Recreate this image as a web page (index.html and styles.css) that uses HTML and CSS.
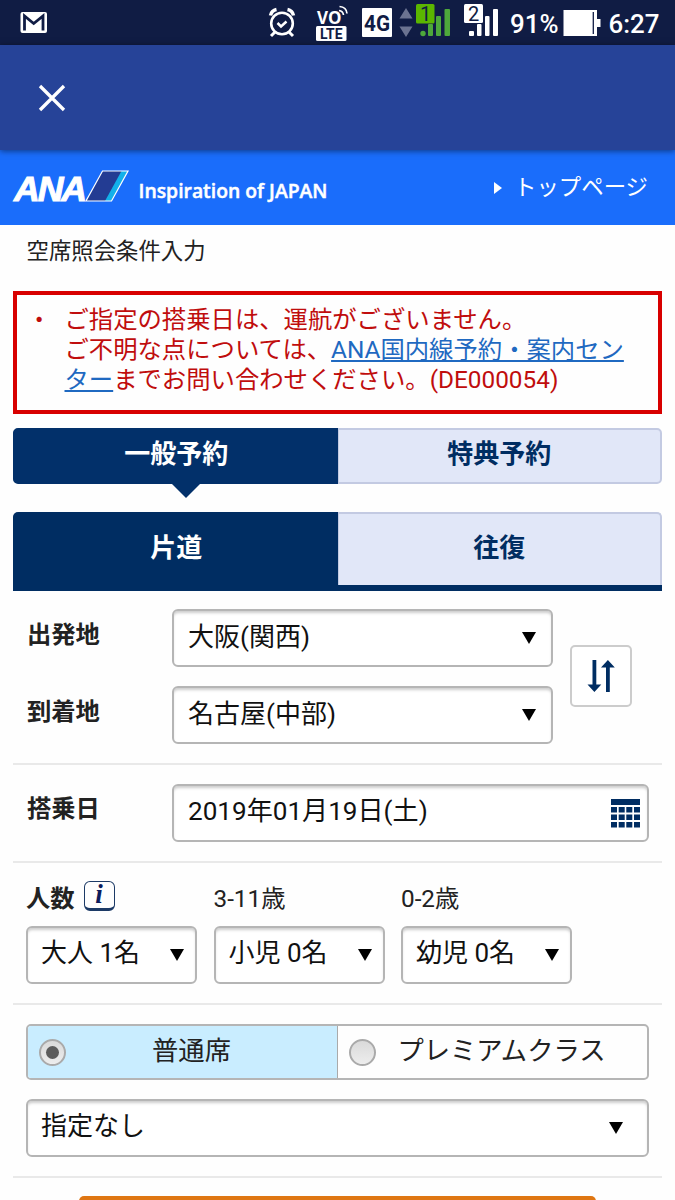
FILE: index.html
```html
<!DOCTYPE html>
<html lang="ja">
<head>
  <title>空席照会条件入力</title>
  <meta charset="utf-8">
  <link rel="stylesheet" href="styles.css">
</head>
<body>
  <div class="screen">
    <div class="status-bar">
      <svg width="675" height="45" viewBox="0 0 675 45">
        <!-- mail -->
        <rect x="20.5" y="12" width="26.5" height="21" rx="2" fill="#fff"/>
        <path d="M24.5 30.5V16l9.2 7.5L43 16v14.5" fill="none" stroke="#101c44" stroke-width="2.8"/>
        <!-- alarm -->
        <g fill="none" stroke="#fff">
          <circle cx="282" cy="23.5" r="10.8" stroke-width="2.6"/>
          <path d="M277.5 23l3.5 3.5 5.5-5" stroke-width="2.5"/>
          <path d="M270.5 15.5q1-5 6-6M293.5 15.5q-1-5-6-6" stroke-width="3.5"/>
          <path d="M275 32l-4 4M289 32l4 4" stroke-width="3"/>
        </g>
        <!-- volte -->
        <text x="317" y="23.5" class="st-bold" font-size="17" textLength="24.5" lengthAdjust="spacingAndGlyphs">VO</text>
        <path d="M339 10.5q4 .5 4.5 4.5M339.5 6.5q7 .5 7.5 7" fill="none" stroke="#fff" stroke-width="1.7"/>
        <rect x="316" y="26" width="30.5" height="15" rx="1.5" fill="#fff"/>
        <text x="320" y="38.5" class="st-dark" font-size="14" textLength="22.5" lengthAdjust="spacingAndGlyphs">LTE</text>
        <!-- network -->
        <rect x="362" y="8" width="30" height="29" rx="1" fill="#fff"/>
        <text x="364" y="30.5" class="st-dark" font-size="22" textLength="26" lengthAdjust="spacingAndGlyphs">4G</text>
        <path d="M406 8l6.5 10.5h-13zM406 37l6.5-10.5h-13z" fill="#6b7391"/>
        <!-- sim 1 -->
        <g fill="#4ea83b">
          <circle cx="423" cy="33.5" r="2.7"/>
          <rect x="428" y="24" width="5" height="12" rx="1"/>
          <rect x="436" y="16" width="5" height="20" rx="1"/>
          <rect x="444.5" y="9" width="5.5" height="27" rx="1"/>
        </g>
        <rect x="416" y="4" width="18.5" height="19.5" rx="1.5" fill="#5bb600"/>
        <text x="420" y="21" class="st-num" font-size="20">1</text>
        <!-- sim 2 -->
        <g fill="#fff">
          <rect x="469" y="31" width="5" height="5" rx="1"/>
          <rect x="477" y="24" width="4.5" height="12" rx="1"/>
          <rect x="485" y="16" width="4.5" height="20" rx="1"/>
          <rect x="493" y="9" width="5" height="27" rx="1"/>
        </g>
        <rect x="464" y="4" width="19" height="19" rx="1.5" fill="#fff"/>
        <text x="468" y="21" class="st-num" font-size="20">2</text>
        <text x="510" y="32.5" class="st-text" font-size="26" textLength="48.5" lengthAdjust="spacingAndGlyphs">91%</text>
        <!-- battery -->
        <path d="M563.5 10H597v9h3.5v8H597v9h-33.5z" fill="#fff"/>
        <path d="M593.3 12v22" stroke="#101c44" stroke-width="1.3"/>
        <text x="608.5" y="32.5" class="st-text" font-size="26" textLength="51" lengthAdjust="spacingAndGlyphs">6:27</text>
      </svg>
    </div>

    <div class="app-bar">
      <svg width="28" height="28" viewBox="0 0 28 28">
        <path d="M2 2l24 24M26 2L2 26" stroke="#fff" stroke-width="3.3"/>
      </svg>
    </div>

    <header class="site-header">
      <svg class="logo" width="340" height="60" viewBox="0 0 340 60">
        <text x="14" y="36.3" class="ana" font-size="34.5" textLength="71" lengthAdjust="spacingAndGlyphs">ANA</text>
        <path d="M102.5 6H128l-16.5 30H86z" fill="#233c93"/>
        <path d="M121.5 6H128l-16.5 30H105z" fill="#12b0ea"/>
        <path d="M102.5 6H128l-16.5 30H86z" fill="none" stroke="#fff" stroke-width="1.2"/>
        <text x="138.5" y="32.5" class="tagline" font-size="20.5" textLength="189" lengthAdjust="spacingAndGlyphs">Inspiration of JAPAN</text>
      </svg>
      <a class="top-link" href="#">トップページ</a>
    </header>

    <h1>空席照会条件入力</h1>

    <div class="error-box">
      <span class="bullet">・</span>
      <p>ご指定の搭乗日は、運航がございません。<br>ご不明な点については、<a href="#">ANA国内線予約・案内セン<br>ター</a>までお問い合わせください。(DE000054)</p>
    </div>

    <div class="tabs type-tabs">
      <div class="tab active">一般予約</div>
      <div class="tab">特典予約</div>
    </div>

    <div class="tabs trip-tabs">
      <div class="tab active">片道</div>
      <div class="tab">往復</div>
    </div>

    <div class="section route">
      <div class="route-fields">
        <div class="row">
          <label for="from">出発地</label>
          <div class="field"><select id="from"><option>大阪(関西)</option></select><span class="arrow"></span></div>
        </div>
        <div class="row">
          <label for="to">到着地</label>
          <div class="field"><select id="to"><option>名古屋(中部)</option></select><span class="arrow"></span></div>
        </div>
      </div>
      <button class="swap">
        <svg width="30" height="34" viewBox="0 0 30 34">
          <path d="M6.5 1h3.800v24.500h5L8.400 33 1.500 25.500h5zM20 33h3.800V8.500h5L21.900 1 15 8.500h5z" fill="#002d62"/>
        </svg>
      </button>
    </div>

    <div class="section">
      <div class="row">
        <label for="date">搭乗日</label>
        <div class="field date">
          <input type="text" id="date" value="2019年01月19日(土)">
          <svg width="29" height="29" viewBox="0 0 29 29" fill="#002d62">
            <path d="M0 0h29v6H0z"/>
            <path d="M0 8h6v5.500H0zM7.700 8h6v5.500h-6zM15.300 8h6v5.500h-6zM23 8h6v5.500h-6z"/>
            <path d="M0 15.500h6V21H0zM7.700 15.500h6V21h-6zM15.300 15.500h6V21h-6zM23 15.500h6V21h-6z"/>
            <path d="M0 23h6v5.500H0zM7.700 23h6v5.500h-6zM15.300 23h6v5.500h-6zM23 23h6v5.500h-6z"/>
          </svg>
        </div>
      </div>
    </div>

    <div class="section passengers">
      <div class="passenger">
        <div class="caption"><b>人数</b><span class="info">i</span></div>
        <div class="field"><select><option>大人 1名</option></select><span class="arrow"></span></div>
      </div>
      <div class="passenger">
        <div class="caption">3-11歳</div>
        <div class="field"><select><option>小児 0名</option></select><span class="arrow"></span></div>
      </div>
      <div class="passenger">
        <div class="caption">0-2歳</div>
        <div class="field"><select><option>幼児 0名</option></select><span class="arrow"></span></div>
      </div>
    </div>

    <div class="section seats">
      <div class="seat-class">
        <div class="seat selected"><span class="radio"></span><span class="name">普通席</span></div>
        <div class="seat"><span class="radio"></span><span class="name">プレミアムクラス</span></div>
      </div>
      <div class="field wide"><select><option>指定なし</option></select><span class="arrow"></span></div>
    </div>

    <div class="search-button"></div>
  </div>
</body>
</html>
```
FILE: styles.css
```css
* {
  box-sizing: border-box;
}

body {
  margin: 0;
  font-family: Roboto, 'Noto Sans CJK JP', sans-serif;
  color: #222;
  background: #fefefe;
}

.screen {
  width: 675px;
  height: 1200px;
  overflow: hidden;
}

.status-bar {
  height: 45px;
  background: #101c44;
}

.status-bar svg {
  display: block;
}

.st-text {
  fill: #fff;
  font-weight: 500;
}

.st-bold {
  fill: #fff;
  font-family: 'Open Sans', sans-serif;
  font-weight: bold;
}

.st-dark {
  fill: #101c44;
  font-weight: bold;
}

.st-num {
  fill: #101c44;
}

.app-bar {
  position: relative;
  height: 105px;
  padding: 39px 38px;
  background: #264398;
  box-shadow: 0 1px 6px rgba(0, 0, 0, 0.5);
}

.app-bar svg {
  display: block;
}

.site-header {
  display: flex;
  justify-content: space-between;
  height: 75px;
  padding: 15px 27px 0 0;
  background: #1a6dfb;
}

.logo {
  overflow: visible;
}

.ana {
  fill: #fff;
  font-family: 'Liberation Sans', sans-serif;
  font-weight: bold;
  font-style: italic;
  letter-spacing: -2px;
  stroke: #fff;
  stroke-width: 1px;
}

.tagline {
  fill: #fff;
  font-family: 'Open Sans', sans-serif;
  font-weight: 600;
  stroke: #fff;
  stroke-width: 0.5px;
}

.top-link {
  display: flex;
  align-items: center;
  height: 40px;
  color: #fff;
  font-size: 22.4px;
  text-decoration: none;
}

.top-link::before {
  content: "";
  margin: 6px 12px 0 0;
  border-left: 8px solid #fff;
  border-top: 6.5px solid transparent;
  border-bottom: 6.5px solid transparent;
}

h1 {
  height: 66px;
  margin: 0;
  padding-left: 26.5px;
  font-size: 22.4px;
  font-weight: normal;
  line-height: 52px;
}

.error-box {
  display: flex;
  height: 123px;
  margin: 0 13px;
  padding: 10px 0 0 10px;
  border: 4px solid #d80000;
  color: #c00d0d;
  font-size: 24.35px;
  line-height: 30px;
  white-space: nowrap;
}

.error-box .bullet {
  width: 37.5px;
}

.error-box p {
  margin: 0;
}

.error-box a {
  color: #1f69c1;
  text-underline-offset: 2px;
}

.tabs {
  display: flex;
  margin: 14px 13px 0;
  font-size: 26px;
  font-weight: bold;
  text-align: center;
}

.tab {
  width: 50%;
  border: 2px solid #c3cae2;
  border-left-width: 1px;
  border-radius: 0 5px 5px 0;
  background: #e1e7f8;
  color: #002d62;
}

.tab.active {
  padding-left: 3px;
  border-color: #02306a;
  border-radius: 5px 0 0 5px;
  background: #02306a;
  color: #fff;
}

.type-tabs .tab {
  position: relative;
  height: 56px;
  line-height: 49px;
}

.type-tabs .active::after {
  content: "";
  position: absolute;
  left: 157px;
  top: 53px;
  border: 15px solid transparent;
  border-top-color: #02306a;
  border-bottom: 0;
}

.trip-tabs {
  height: 79px;
  margin-top: 28px;
  border-bottom: 6px solid #002d62;
}

.trip-tabs .tab {
  border-bottom: 0;
  border-radius: 0 5px 0 0;
  line-height: 68px;
}

.trip-tabs .active {
  border-color: #002d62;
  border-radius: 5px 0 0 0;
  background: #002d62;
}

.section {
  margin: 0 13px;
  padding: 19px 13px;
  border-bottom: 2px solid #e9e9e9;
}

.route {
  display: flex;
  gap: 17px;
  align-items: center;
  padding-top: 18px;
}

.route-fields {
  display: flex;
  flex-direction: column;
  gap: 19px;
}

.row {
  display: flex;
}

.row label {
  width: 146px;
  padding-left: 1px;
  font-size: 24.3px;
  font-weight: bold;
  line-height: 50px;
}

.route .row label {
  line-height: 52px;
}

.field {
  display: flex;
  align-items: center;
  width: 381px;
  height: 58px;
  padding: 0 15px 0 14px;
  border: 2px solid #b5b5b5;
  border-radius: 6px;
  background: #fff;
  box-shadow: inset 0 3px 3px -1px #ccc;
}

.field select,
.field input {
  flex: 1;
  min-width: 0;
  height: 48px;
  padding: 0 0 5px;
  border: 0;
  background: none;
  color: #111;
  font-family: inherit;
  font-size: 26px;
  appearance: none;
}

.route .field select {
  padding-bottom: 3px;
}

.field input {
  padding-bottom: 9px;
  font-size: 26.1px;
}

.arrow {
  border: 7px solid transparent;
  border-top: 12px solid #000;
  border-bottom: 0;
}

.swap {
  display: flex;
  align-items: center;
  justify-content: center;
  width: 62px;
  height: 62px;
  margin-bottom: 2px;
  padding: 0;
  border: 2px solid #ccc;
  border-radius: 5px;
  background: #fff;
}

.date {
  width: 477px;
  padding-right: 7px;
}

.passengers {
  display: flex;
  gap: 16.5px;
  height: 142px;
}

.passenger .field {
  width: 171px;
  padding: 0 11px 0 13px;
}

.caption {
  display: flex;
  align-items: center;
  height: 44px;
  padding-bottom: 16px;
  font-size: 24.3px;
}

.info {
  width: 31px;
  height: 30px;
  margin: -1px 0 0 9px;
  border: 1.5px solid #1c3a66;
  border-bottom-width: 3px;
  border-radius: 6px;
  color: #0c1c5c;
  font: italic bold 27px/25px 'Liberation Serif', serif;
  text-align: center;
}

.seat-class {
  display: flex;
  height: 56px;
  margin-bottom: 19px;
  border: 2px solid #b5b5b5;
  border-radius: 5px;
  overflow: hidden;
}

.seat {
  display: flex;
  flex: 1;
  align-items: center;
  padding-left: 11px;
  font-size: 26px;
}

.seat.selected {
  border-right: 1px solid #aaa;
  background: #c9edff;
}

.seat .name {
  flex: 1;
  padding: 0 20px 7px 0;
  font-size: 26.3px;
  text-align: center;
}

.radio {
  display: flex;
  align-items: center;
  justify-content: center;
  width: 27px;
  height: 27px;
  border: 2px solid #aaa;
  border-radius: 50%;
  background: linear-gradient(#dadada, #ededed);
}

.selected .radio::after {
  content: "";
  width: 13px;
  height: 13px;
  border-radius: 50%;
  background: #5c5c5c;
}

.field.wide {
  width: 623px;
  padding: 0 24px 0 13px;
}

.search-button {
  height: 60px;
  margin: 18px 79px;
  border-radius: 5px;
  background: #df7612;
}
```
